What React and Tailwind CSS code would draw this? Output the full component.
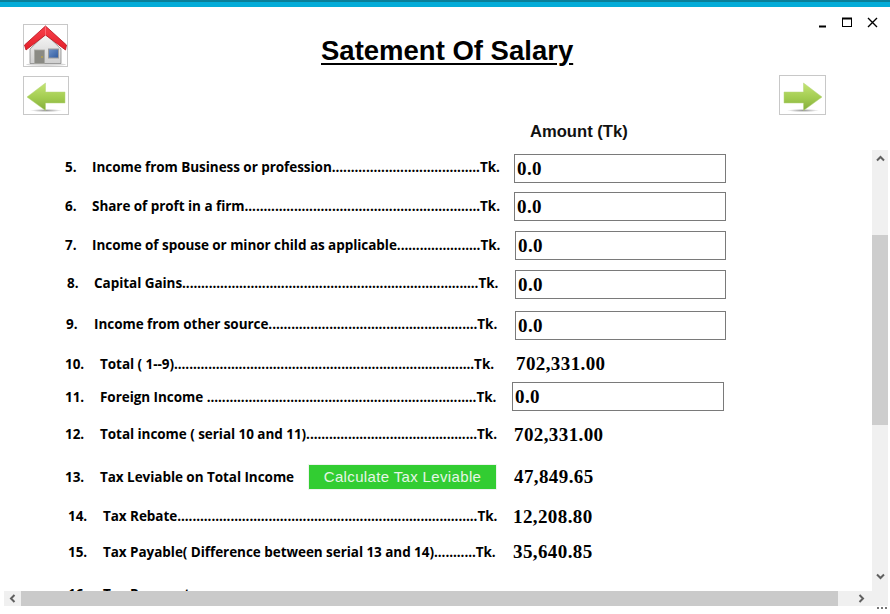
import React from "react";

const House = () => (
  <svg width="43" height="41" viewBox="0 0 43 41">
    <defs>
      <linearGradient id="wall" x1="0" y1="0" x2="0" y2="1"><stop offset="0" stopColor="#f6f6f6" /><stop offset="1" stopColor="#cfcfcf" /></linearGradient>
      <linearGradient id="roof" x1="0" y1="0" x2="0" y2="1"><stop offset="0" stopColor="#f8404c" /><stop offset="1" stopColor="#e4202a" /></linearGradient>
      <linearGradient id="win" x1="0" y1="0" x2="1" y2="1"><stop offset="0" stopColor="#6f93c8" /><stop offset="1" stopColor="#2f5aa0" /></linearGradient>
    </defs>
    <ellipse cx="22" cy="39.5" rx="20" ry="1.4" fill="#d8d8d8" />
    <path d="M6 24 L21.5 9 L37 24 V38.5 H6 Z" fill="url(#wall)" stroke="#8a8a8a" strokeWidth="0.8" />
    <rect x="10.5" y="25" width="10" height="13.5" fill="#8a8a84" stroke="#a8a8a4" strokeWidth="0.8" />
    <circle cx="18" cy="32" r="0.8" fill="#d9b520" />
    <rect x="24.5" y="24" width="10" height="9" fill="url(#win)" stroke="#9c9c9c" strokeWidth="1" />
    <path d="M0.5 20 L21.5 1 L42.5 20 L41.5 25 L21.5 10 L2 25 Z" fill="url(#roof)" stroke="#b5121c" strokeWidth="0.8" strokeLinejoin="round" />
    <path d="M21.5 1.5 L21.5 10" stroke="#ff8088" strokeWidth="0.7" />
  </svg>
);

const Arrow = ({ id, flip }) => (
  <svg width="40" height="33" viewBox="0 0 40 33" style={flip ? { transform: "scaleX(-1)" } : undefined}>
    <defs>
      <linearGradient id={id} x1="0" y1="0" x2="0" y2="1"><stop offset="0" stopColor="#c4e474" /><stop offset="0.55" stopColor="#a2cc50" /><stop offset="1" stopColor="#84ac3c" /></linearGradient>
      <radialGradient id={id + "s"}><stop offset="0" stopColor="#989898" /><stop offset="1" stopColor="#ffffff" /></radialGradient>
    </defs>
    <ellipse cx="20" cy="31.5" rx="16" ry="1.6" fill={`url(#${id}s)`} />
    <path d="M1 13 H20.5 V4 L39 18 L20.5 31.5 V24 H1 Z" fill={`url(#${id})`} stroke="#b5d47a" strokeWidth="0.5" />
  </svg>
);

const Chevron = ({ d }) => (
  <svg width="9" height="7" viewBox="0 0 9 7"><path d={d} fill="none" stroke="#606060" strokeWidth="2" /></svg>
);
const ChevronH = ({ d }) => (
  <svg width="7" height="9" viewBox="0 0 7 9"><path d={d} fill="none" stroke="#606060" strokeWidth="2" /></svg>
);

const labelCls = "font-['Open_Sans',sans-serif] font-bold text-[13.5px] text-black whitespace-nowrap tracking-[-0.05px]";
const valueCls = "font-['Liberation_Serif',serif] font-bold text-[19px] tracking-[0.4px] text-black";
const inputCls = "h-full w-[212px] border border-[#7a7a7a] bg-white pl-[2px] outline-none " + valueCls;

const Row = ({ rowCls, numCls, num, labelWidth, children, label, lift = "-mt-[1px]" }) => (
  <div className={"flex items-center shrink-0 " + rowCls}>
    <span className={labelCls + " " + lift + " " + numCls}>{num}</span>
    <span className={labelCls + " " + lift + " " + labelWidth}>{label}</span>
    {children}
  </div>
);

const d = (n) => ".".repeat(n);

export default function App() {
  return (
    <div className="w-[890px] h-[614px] bg-white flex flex-col overflow-hidden">
      <div className="h-[7px] shrink-0 bg-gradient-to-b from-[#0b7f99] from-30% to-[#04acd8] to-30%" />

      <div className="h-[108px] shrink-0 flex">
        <div className="ml-[23px] mt-[17px] w-[46px] flex flex-col gap-[9px]">
          <button className="w-[45px] h-[43px] border border-[#c8c8c8] flex items-center justify-center bg-white"><House /></button>
          <button className="w-[46px] h-[39px] border border-[#c8c8c8] flex items-center justify-center bg-white"><Arrow id="al" flip /></button>
        </div>
        <h1 className="ml-[252px] mt-[27px] h-[36px] font-['Liberation_Sans',sans-serif] font-bold text-[27.5px] leading-[34px] text-black underline underline-offset-[3px] whitespace-nowrap">Satement Of Salary</h1>
        <div className="ml-auto w-[111px] flex flex-col">
          <div className="h-[17px] mt-[5px] relative text-black">
            <svg width="111" height="17" viewBox="0 0 111 17">
              <path d="M40 14.5 H47" stroke="#000" strokeWidth="2" />
              <rect x="63.5" y="6.5" width="9" height="8" fill="none" stroke="#000" strokeWidth="1" />
              <path d="M63 6.5 H73" stroke="#000" strokeWidth="2" />
              <path d="M89 6 L98 15 M98 6 L89 15" stroke="#000" strokeWidth="1.4" />
            </svg>
          </div>
          <button className="mt-[46px] w-[47px] h-[40px] border border-[#c8c8c8] flex items-center justify-center bg-white"><Arrow id="ar" /></button>
        </div>
      </div>

      <div className="h-[35px] shrink-0 pl-[530px] pt-[7px] font-['Liberation_Sans',sans-serif] font-bold text-[16.6px] leading-[20px] text-[#111] whitespace-nowrap">Amount (Tk)</div>

      <div className="h-[441px] shrink-0 flex">
        <div className="w-[872px] overflow-hidden flex flex-col">
          <Row rowCls="mt-[4px] h-[29px]" lift="-mt-[2px]" numCls="ml-[65px] w-[27px]" labelWidth="w-[422px]" num="5." label={"Income from Business or profession" + d(39) + "Tk."}>
            <input readOnly value="0.0" className={inputCls} />
          </Row>
          <Row rowCls="mt-[9px] h-[29px]" numCls="ml-[65px] w-[27px]" labelWidth="w-[422px]" num="6." label={"Share of proft in a firm" + d(62) + "Tk."}>
            <input readOnly value="0.0" className={inputCls} />
          </Row>
          <Row rowCls="mt-[10px] h-[29px]" numCls="ml-[65px] w-[27px]" labelWidth="w-[423px]" num="7." label={"Income of spouse or minor child as applicable" + d(22) + "Tk."}>
            <input readOnly value="0.0" className={inputCls + " !w-[211px]"} />
          </Row>
          <Row rowCls="mt-[10px] h-[29px]" lift="-mt-[2px]" numCls="ml-[67px] w-[27px]" labelWidth="w-[421px]" num="8." label={"Capital Gains" + d(78) + "Tk."}>
            <input readOnly value="0.0" className={inputCls + " !w-[211px]"} />
          </Row>
          <Row rowCls="mt-[12px] h-[29px]" lift="-mt-[3px]" numCls="ml-[66px] w-[28px]" labelWidth="w-[421px]" num="9." label={"Income from other source" + d(55) + "Tk."}>
            <input readOnly value="0.0" className={inputCls + " !w-[211px]"} />
          </Row>
          <Row rowCls="mt-[12px] h-[24px]" lift="mt-[1px]" numCls="ml-[65px] w-[35px]" labelWidth="w-[416px]" num="10." label={"Total ( 1--9)" + d(79) + "Tk."}>
            <span className={valueCls}>702,331.00</span>
          </Row>
          <Row rowCls="mt-[6px] h-[29px]" lift="mt-[2px]" numCls="ml-[65px] w-[35px]" labelWidth="w-[412px]" num="11." label={"Foreign Income " + d(71) + "Tk."}>
            <input readOnly value="0.0" className={inputCls} />
          </Row>
          <Row rowCls="mt-[11px] h-[24px]" lift="mt-[1px]" numCls="ml-[65px] w-[35px]" labelWidth="w-[414px]" num="12." label={"Total income ( serial 10 and 11)" + d(45) + "Tk."}>
            <span className={valueCls + " mt-[2px]"}>702,331.00</span>
          </Row>
          <Row rowCls="mt-[18px] h-[26px]" lift="mt-[1px]" numCls="ml-[65px] w-[35px]" labelWidth="w-[209px]" num="13." label={"Tax Leviable on Total Income"}>
            <button className="w-[189px] h-[26px] -ml-[1px] bg-[#32cd32] border border-[#eef4ee] text-[#e6f6e6] font-['Liberation_Sans',sans-serif] text-[15px] tracking-[0.35px] whitespace-nowrap">Calculate Tax Leviable</button>
            <span className={valueCls + " ml-[17px]"}>47,849.65</span>
          </Row>
          <Row rowCls="mt-[14px] h-[24px]" lift="mt-[1px]" numCls="ml-[68px] w-[35px]" labelWidth="w-[410px]" num="14." label={"Tax Rebate" + d(79) + "Tk."}>
            <span className={valueCls + " mt-[2px]"}>12,208.80</span>
          </Row>
          <Row rowCls="mt-[12px] h-[24px]" lift="mt-[1px]" numCls="ml-[68px] w-[35px]" labelWidth="w-[410px]" num="15." label={"Tax Payable( Difference between serial 13 and 14)" + d(11) + "Tk."}>
            <span className={valueCls}>35,640.85</span>
          </Row>
          <Row rowCls="mt-[19px] h-[24px]" numCls="ml-[68px] w-[35px]" labelWidth="w-[410px]" num="16." label={"Tax Payment"} />
        </div>
        <div className="w-[16px] bg-[#f0f0f0] flex flex-col items-center">
          <div className="h-[17px] shrink-0 flex items-center justify-center"><Chevron d="M1 5.5 L4.5 2 L8 5.5" /></div>
          <div className="h-[68px] shrink-0" />
          <div className="h-[190px] w-full shrink-0 bg-[#cdcdcd]" />
          <div className="flex-1" />
          <div className="h-[17px] shrink-0 flex items-center justify-center -mt-[6px] mb-[6px]"><Chevron d="M1 1.5 L4.5 5 L8 1.5" /></div>
        </div>
      </div>

      <div className="h-[15px] shrink-0 ml-[4px] w-[884px] flex bg-[#f0f0f0]">
        <div className="w-[17px] flex items-center justify-center"><ChevronH d="M5.5 1 L2 4.5 L5.5 8" /></div>
        <div className="w-[817px] bg-[#cacaca]" />
        <div className="flex-1 flex items-center justify-end pr-[23px]"><ChevronH d="M1.5 1 L5 4.5 L1.5 8" /></div>
      </div>
      <div className="flex justify-end pr-[3px] pt-[1px] gap-[2px]">
        <span className="w-[2px] h-[2px] bg-[#777]" />
        <span className="w-[2px] h-[2px] bg-[#777]" />
        <span className="w-[2px] h-[2px] bg-[#777]" />
      </div>
    </div>
  );
}
